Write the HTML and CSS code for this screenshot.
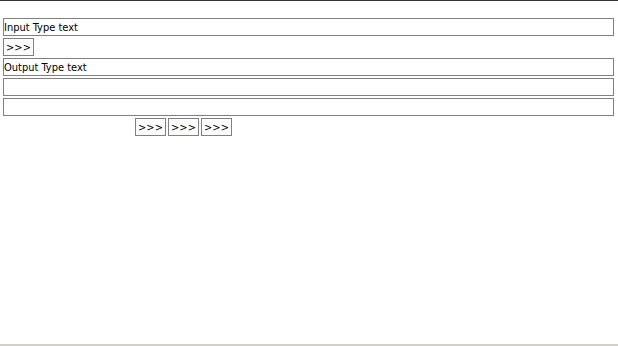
FILE: index.html
```html
<!DOCTYPE html>
<html lang="en">
<head>
    <meta charset="UTF-8">
    <title>Type converter</title>
    <link rel="stylesheet" href="styles.css">
</head>
<body>
    <div class="page">
        <div class="form">
            <input type="text" class="field" value="Input Type text">
            <div class="row">
                <button class="go">&gt;&gt;&gt;</button>
            </div>
            <input type="text" class="field" value="Output Type text">
            <input type="text" class="field" value="">
            <input type="text" class="field" value="">
            <div class="row actions">
                <button class="go">&gt;&gt;&gt;</button>
                <button class="go">&gt;&gt;&gt;</button>
                <button class="go">&gt;&gt;&gt;</button>
            </div>
        </div>
        <div class="statusbar"></div>
    </div>
</body>
</html>
```

FILE: styles.css
```css
html, body {
    margin: 0;
    padding: 0;
    background: #fff;
}
.page {
    height: 346px;
    box-sizing: border-box;
    border-top: 1px solid #333;
    display: flex;
    flex-direction: column;
    font-family: "DejaVu Sans Condensed", "DejaVu Sans", Tahoma, sans-serif;
    font-size: 11px;
}
.form {
    display: flex;
    flex-direction: column;
    gap: 2px;
    padding: 17px 4px 0 3px;
}
.field {
    display: block;
    box-sizing: border-box;
    width: 611px;
    height: 18px;
    margin: 0;
    padding: 0;
    border: 1px solid #808080;
    font-family: inherit;
    font-size: 11px;
    color: #000;
    background: #fff;
    outline: none;
}
.row {
    display: flex;
    gap: 2px;
}
.actions {
    padding-left: 132px;
}
.go {
    box-sizing: border-box;
    width: 31px;
    height: 18px;
    margin: 0;
    padding: 0;
    border: 1px solid #808080;
    background: #fff;
    font-family: inherit;
    font-size: 11px;
    color: #000;
}
.statusbar {
    margin-top: auto;
    height: 2px;
    background: #d4d0c8;
}
```
